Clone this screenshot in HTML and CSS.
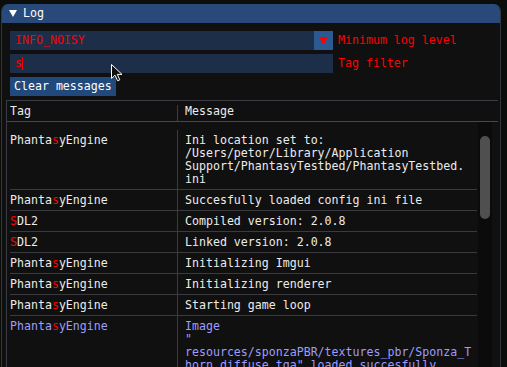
FILE: index.html
```html
<!DOCTYPE html>
<html lang="en">
<head>
    <meta charset="UTF-8">
    <title>Log</title>
    <link rel="stylesheet" href="styles.css">
</head>
<body>
    <div class="window">
        <div class="titlebar">
            <svg class="tri" width="8" height="7" viewBox="0 0 8 7"><path d="M0 0H8L4 7Z" fill="#fff"/></svg>
            <span>Log</span>
        </div>
        <div class="content">
            <div class="field-row">
                <div class="combo">
                    <span class="red">INFO_NOISY</span>
                    <span class="combo-arrow"><svg width="9" height="8" viewBox="0 0 9 8"><path d="M0 0H9L4.5 8Z" fill="#ff0000"/></svg></span>
                </div>
                <span class="red">Minimum log level</span>
            </div>
            <div class="field-row">
                <div class="combo input">
                    <span class="red">s</span><span class="caret"></span>
                </div>
                <span class="red">Tag filter</span>
            </div>
            <button class="btn">Clear messages</button>

            <div class="table">
                <div class="thead">
                    <div class="th tag">Tag</div>
                    <div class="th msg">Message</div>
                </div>
                <div class="tbody">
                    <div class="rows">
                        <div class="row">
                            <div class="tag">Phanta<span class="red">s</span>yEngine</div>
                            <div class="msg">Ini location set to:
/Users/petor/Library/Application
Support/PhantasyTestbed/PhantasyTestbed.
ini</div>
                        </div>
                        <div class="row">
                            <div class="tag">Phanta<span class="red">s</span>yEngine</div>
                            <div class="msg">Succesfully loaded config ini file</div>
                        </div>
                        <div class="row">
                            <div class="tag"><span class="red">S</span>DL2</div>
                            <div class="msg">Compiled version: 2.0.8</div>
                        </div>
                        <div class="row">
                            <div class="tag"><span class="red">S</span>DL2</div>
                            <div class="msg">Linked version: 2.0.8</div>
                        </div>
                        <div class="row">
                            <div class="tag">Phanta<span class="red">s</span>yEngine</div>
                            <div class="msg">Initializing Imgui</div>
                        </div>
                        <div class="row">
                            <div class="tag">Phanta<span class="red">s</span>yEngine</div>
                            <div class="msg">Initializing renderer</div>
                        </div>
                        <div class="row">
                            <div class="tag">Phanta<span class="red">s</span>yEngine</div>
                            <div class="msg">Starting game loop</div>
                        </div>
                        <div class="row noisy">
                            <div class="tag">Phanta<span class="red">s</span>yEngine</div>
                            <div class="msg">Image
"
resources/sponzaPBR/textures_pbr/Sponza_T
horn_diffuse.tga" loaded succesfully</div>
                        </div>
                    </div>
                    <div class="track"><div class="grab"></div></div>
                </div>
            </div>
        </div>
    </div>

    <svg class="pointer" width="14" height="19" viewBox="0 0 14 19">
        <path d="M1.5 1.5V15.5L5 12.2L7.6 17.8L9.8 16.8L7.3 11.4H12Z" fill="#111" stroke="#fff" stroke-width="1"/>
    </svg>
</body>
</html>
```

FILE: styles.css
```css
body {
    margin: 0;
    height: 367px;
    overflow: hidden;
    background: #0a0d0a;
    font-family: "DejaVu Sans Mono", monospace;
    font-size: 11.6px;
    line-height: 13px;
    color: #ececec;
}
.window {
    margin: 4px 0 0 1px;
    width: 500px;
    height: 363px;
    box-sizing: border-box;
    background-color: #101010;
    border-left: 1px solid #35353d;
    border-right: 1px solid #35353d;
    border-radius: 7px 7px 0 0;
    overflow: hidden;
}
.titlebar {
    height: 19px;
    background-color: #28497a;
    color: #fff;
    display: flex;
    align-items: center;
    padding-left: 7px;
    gap: 6px;
}
.content {
    padding: 8px 8px 0 8px;
    display: flex;
    flex-direction: column;
    align-items: flex-start;
    gap: 4px;
}
.red {
    color: #ff0000;
}
.field-row {
    display: flex;
    align-items: center;
    gap: 5px;
}
.combo {
    width: 323px;
    height: 19px;
    box-sizing: border-box;
    background-color: #1c2e48;
    padding-left: 5px;
    display: flex;
    align-items: center;
    justify-content: space-between;
}
.combo-arrow {
    width: 19px;
    height: 19px;
    background-color: #2b5a93;
    display: flex;
    align-items: center;
    justify-content: center;
}
.input {
    justify-content: flex-start;
}
.caret {
    width: 1px;
    height: 13px;
    background-color: #ff0000;
}
.btn {
    height: 19px;
    padding: 0 4px;
    border: none;
    background-color: #22497b;
    color: #fff;
    font: inherit;
    line-height: 13px;
}
.table {
    margin-left: -4px;
    width: 491px;
    border-left: 1px solid #3c3c44;
    border-top: 1px solid #3c3c44;
}
.thead {
    display: flex;
    height: 21px;
    box-sizing: border-box;
    border-bottom: 1px solid #46464e;
}
.th.tag {
    width: 170px;
    padding: 4px 0 0 3px;
    box-sizing: border-box;
}
.th.msg {
    margin-top: 4px;
    border-left: 1px solid #3c3c44;
    padding-left: 7px;
}
.tbody {
    display: flex;
    height: 250px;
}
.rows {
    margin-left: 3px;
    width: 467px;
    padding-top: 8px;
}
.row {
    display: flex;
    border-bottom: 1px solid #3a3a40;
}
.row .tag {
    width: 167px;
    padding: 4px 0 3px 0;
}
.row .msg {
    flex: 1;
    border-left: 1px solid #3a3a40;
    padding: 4px 0 3px 7px;
    white-space: pre;
}
.row.noisy {
    color: #9d9dff;
    border-bottom: none;
}
.track {
    margin-left: 1px;
    width: 14px;
    padding: 14px 2px 0 2px;
    box-sizing: border-box;
    background-color: #0b0b0b;
}
.grab {
    height: 83px;
    border-radius: 5px;
    background-color: #4f4f4f;
}
.pointer {
    position: absolute;
    left: 110px;
    top: 63px;
}
```
